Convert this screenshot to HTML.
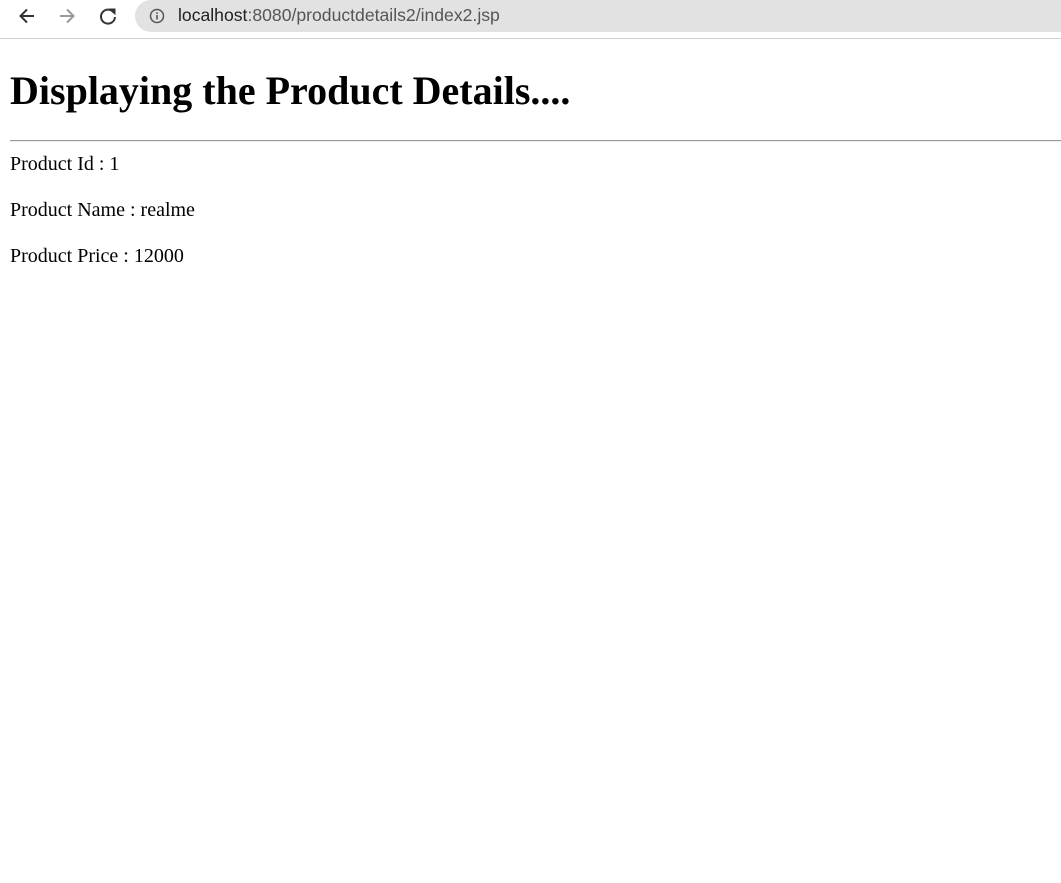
<!DOCTYPE html>
<html><head><style>
body{margin:0;width:1061px;height:883px;background:#fff;position:relative;font-family:"Liberation Serif",serif;overflow:hidden}
.bar{position:absolute;left:0;top:0;width:1061px;height:38px;background:#fff;border-bottom:1px solid #d0d0d0}
.omni{position:absolute;left:135px;top:0;width:940px;height:32px;background:#e2e2e2;border-radius:0 0 0 16px;border-top-left-radius:16px}
.url{position:absolute;left:178px;top:5px;font-family:"Liberation Sans",sans-serif;font-size:17.6px;color:#555}
.url b{font-weight:normal;color:#202020}
.t{position:absolute;left:10px;white-space:nowrap;color:#000}
h1{margin:0;font-size:40px;font-weight:bold}
hr{position:absolute;left:10px;top:140px;width:1051px;margin:0;border:0;border-top:1px solid #999;border-bottom:1px solid #eee}
</style></head><body>
<div class="bar">
<svg style="position:absolute;left:17px;top:6px" width="20" height="20" viewBox="0 0 20 20"><path d="M17 10H4M10 3.5L3.5 10L10 16.5" stroke="#333" stroke-width="2" fill="none"/></svg>
<svg style="position:absolute;left:57px;top:6px" width="20" height="20" viewBox="0 0 20 20"><path d="M3 10H16M10 3.5L16.5 10L10 16.5" stroke="#999" stroke-width="2" fill="none"/></svg>
<svg style="position:absolute;left:97px;top:5px" width="22" height="22" viewBox="0 0 22 22"><path d="M17 8A7 7 0 1 0 18 12" stroke="#333" stroke-width="2" fill="none"/><path d="M13 4H18V9Z" fill="#333" stroke="#333" stroke-width="1"/></svg>
<div class="omni"></div>
<svg style="position:absolute;left:149px;top:8px" width="16" height="16" viewBox="0 0 16 16"><circle cx="8" cy="8" r="6.5" stroke="#555" stroke-width="1.5" fill="none"/><rect x="7.2" y="7" width="1.6" height="4.5" fill="#555"/><rect x="7.2" y="4.3" width="1.6" height="1.6" fill="#555"/></svg>
<div class="url"><b>localhost</b>:8080/productdetails2/index2.jsp</div>
</div>
<h1 class="t" style="top:67px">Displaying the Product Details....</h1>
<hr>
<div class="t" style="top:153px;font-size:20px">Product Id : 1</div>
<div class="t" style="top:199px;font-size:20px">Product Name : realme</div>
<div class="t" style="top:245px;font-size:20px">Product Price : 12000</div>
</body></html>
